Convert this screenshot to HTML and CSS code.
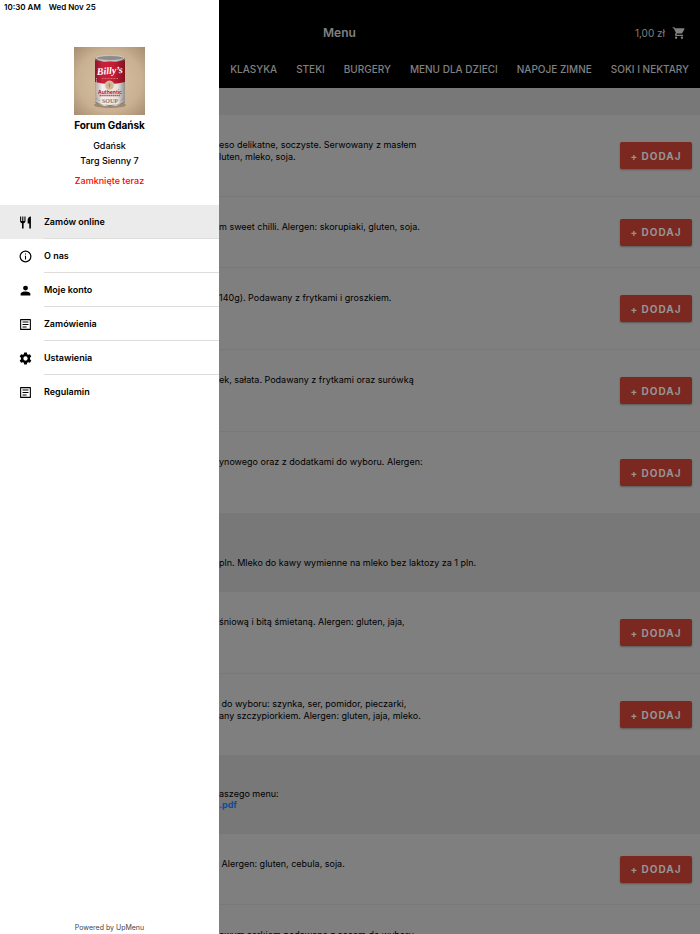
FILE: index.html
```html
<!DOCTYPE html>
<html lang="pl">
<head>
<meta charset="utf-8">
<meta name="viewport" content="width=device-width, initial-scale=1">
<title>Menu</title>
<link rel="stylesheet" href="styles.css">
</head>
<body>
<div class="app">
  <aside class="drawer">
    <div class="status"><span>10:30 AM</span><span>Wed Nov 25</span></div>
    <div class="place">
      <svg class="logo" viewBox="0 0 71 68" aria-hidden="true">
        <defs>
          <radialGradient id="paper" r=".75"><stop offset="0" stop-color="#d8c1a4"/><stop offset=".6" stop-color="#c9b092"/><stop offset="1" stop-color="#a0866b"/></radialGradient>
          <linearGradient id="red"><stop offset="0" stop-color="#8d1524"/><stop offset=".25" stop-color="#c9213a"/><stop offset=".6" stop-color="#c71d35"/><stop offset="1" stop-color="#84121f"/></linearGradient>
          <linearGradient id="white"><stop offset="0" stop-color="#a9a29c"/><stop offset=".25" stop-color="#f3efec"/><stop offset=".75" stop-color="#e7e2df"/><stop offset="1" stop-color="#948e89"/></linearGradient>
          <linearGradient id="metal"><stop offset="0" stop-color="#555"/><stop offset=".3" stop-color="#ddd"/><stop offset=".5" stop-color="#777"/><stop offset=".7" stop-color="#ccc"/><stop offset="1" stop-color="#555"/></linearGradient>
        </defs>
        <rect width="71" height="68" fill="url(#paper)"/>
        <ellipse cx="36" cy="58" rx="16" ry="3" fill="#765d45" opacity=".5"/>
        <path d="M21.500 11Q36 5 50.500 11V56Q36 63 21.500 56Z" fill="url(#metal)"/>
        <path d="M21 14Q36 18 51 14V55Q36 61 21 55Z" fill="url(#white)"/>
        <path d="M21 13Q36 17 51 13V35Q36 39 21 35Z" fill="url(#red)"/>
        <ellipse cx="36" cy="11" rx="14" ry="2.500" fill="#8e8c88" stroke="#d3d0cb" stroke-width=".8"/>
        <text class="logo-script" x="36" y="27" text-anchor="middle" transform="rotate(-4 36 27)">Billy’s</text>
        <path d="M28 31.500H44" stroke="#dd8a8f" stroke-width=".7" stroke-dasharray="1 .5"/>
        <circle cx="35.500" cy="38.500" r="4.500" fill="#cfb796" stroke="#eadcc5" stroke-width=".7"/>
        <path d="M35.500 36.500V40.500M34.500 38H36.500" stroke="#8d7454" stroke-width=".6"/>
        <text class="logo-line" x="36" y="47" text-anchor="middle">Authentic</text>
        <path d="M25.500 48.500H46.500" stroke="#c94a58" stroke-width="1.400" stroke-dasharray="1.500 .4"/>
        <text class="logo-soup" x="36" y="56" text-anchor="middle">SOUP</text>
        <path d="M22.500 31V46" stroke="#d9bcbc" stroke-width=".8" stroke-dasharray="1 .6"/>
        <path d="M22.500 51.500L26 54M46.500 54L50 51" stroke="#8b7770" stroke-width=".8" stroke-dasharray="1 .5"/>
      </svg>
      <h2 class="place-name">Forum Gdańsk</h2>
      <p class="address">Gdańsk<br>Targ Sienny 7</p>
      <p class="closed">Zamknięte teraz</p>
    </div>
    <nav class="links">
      <a class="link active" href="#"><svg viewBox="0 0 24 24"><path d="M2 1v8c0 2.300 1.500 4 3.500 4.400V23h3v-9.600C10.500 13 12 11.300 12 9V1h-2v8H8V1H6v8H4V1zM22 1c-3.500 0-6 3-6 7v6h3v9h3z"/></svg><span>Zamów online</span></a>
      <a class="link" href="#"><svg viewBox="0 0 24 24"><path d="M11 6.500h2v2h-2zm0 4h2v7h-2zM12 1a11 11 0 1 0 0 22 11 11 0 0 0 0-22zm0 19.800a8.800 8.800 0 1 1 0-17.600 8.800 8.800 0 0 1 0 17.600z"/></svg><span>O nas</span></a>
      <a class="link" href="#"><svg viewBox="0 0 24 24"><path d="M12 12a4.500 4.500 0 1 0 0-9 4.500 4.500 0 0 0 0 9zm0 2c-3.300 0-9 1.500-9 4.500V21h18v-2.500c0-3-5.700-4.500-9-4.500z"/></svg><span>Moje konto</span></a>
      <a class="link" href="#"><svg viewBox="0 0 24 24"><path d="M20 4v16H4V4zm1-2H3a1 1 0 0 0-1 1v18a1 1 0 0 0 1 1h18a1 1 0 0 0 1-1V3a1 1 0 0 0-1-1zM6.500 6.500h11v2h-11zm0 4.500h11v2h-11zm0 4.500H14v2H6.500z"/></svg><span>Zamówienia</span></a>
      <a class="link" href="#"><svg viewBox="0 0 24 24"><path fill-rule="evenodd" d="M9.500 1h5l.5 3 2.300 1.300 2.900-1.100 2.500 4.300-2.400 1.900v3.200l2.400 1.900-2.500 4.300-2.900-1.100L15 20l-.5 3h-5L9 20l-2.300-1.300-2.900 1.100-2.500-4.300 2.400-1.900v-3.200L1.300 8.500l2.500-4.300 2.900 1.100L9 4zM12 8a4 4 0 1 0 0 8 4 4 0 0 0 0-8z"/></svg><span>Ustawienia</span></a>
      <a class="link" href="#"><svg viewBox="0 0 24 24"><path d="M20 4v16H4V4zm1-2H3a1 1 0 0 0-1 1v18a1 1 0 0 0 1 1h18a1 1 0 0 0 1-1V3a1 1 0 0 0-1-1zM6.500 6.500h11v2h-11zm0 4.500h11v2h-11zm0 4.500H14v2H6.500z"/></svg><span>Regulamin</span></a>
    </nav>
    <p class="powered">Powered by UpMenu</p>
  </aside>
  <div class="page">
    <header class="header">
      <div class="bar">
        <h1 class="title">Menu</h1>
        <span class="price">1,00 zł</span>
        <svg class="cart" viewBox="0 0 24 24" aria-hidden="true"><path d="M7 18a2 2 0 1 0 0 4 2 2 0 0 0 0-4zM1 2v2h2l3.600 7.600-1.400 2.400C4.500 15.400 5.500 17 7 17h12v-2H7.400l1.100-2h7.500c.7 0 1.400-.4 1.700-1l3.600-6.500A1 1 0 0 0 20.400 4H5.200l-.9-2zm16 16a2 2 0 1 0 0 4 2 2 0 0 0 0-4z"/></svg>
      </div>
      <nav class="tabs">
        <a href="#">KLASYKA</a><a href="#">STEKI</a><a href="#">BURGERY</a><a href="#">MENU DLA DZIECI</a><a href="#">NAPOJE ZIMNE</a><a href="#">SOKI I NEKTARY</a>
      </nav>
    </header>
    <main class="menu">
      <div class="band"></div>
      <article class="dish"><p>eso delikatne, soczyste. Serwowany z masłem<br>luten, mleko, soja.</p><button class="add">+ DODAJ</button></article>
      <article class="dish short"><p>m sweet chilli. Alergen: skorupiaki, gluten, soja.</p><button class="add">+ DODAJ</button></article>
      <article class="dish"><p>140g). Podawany z frytkami i groszkiem.</p><button class="add">+ DODAJ</button></article>
      <article class="dish"><p>ek, sałata. Podawany z frytkami oraz surówką</p><button class="add">+ DODAJ</button></article>
      <article class="dish"><p>ynowego oraz z dodatkami do wyboru. Alergen:</p><button class="add">+ DODAJ</button></article>
      <section class="group"><p>pln. Mleko do kawy wymienne na mleko bez laktozy za 1 pln.</p></section>
      <article class="dish"><p>śniową i bitą śmietaną. Alergen: gluten, jaja,</p><button class="add">+ DODAJ</button></article>
      <article class="dish"><p>&nbsp;do wyboru: szynka, ser, pomidor, pieczarki,<br>any szczypiorkiem. Alergen: gluten, jaja, mleko.</p><button class="add">+ DODAJ</button></article>
      <section class="group"><p>aszego menu:<br><a href="#">.pdf</a></p></section>
      <article class="dish short"><p>&nbsp;Alergen: gluten, cebula, soja.</p><button class="add">+ DODAJ</button></article>
      <article class="dish"><p>owym serkiem podawane z sosem do wyboru.</p></article>
    </main>
  </div>
</div>
</body>
</html>
```
FILE: styles.css
```css
* {
  box-sizing: border-box;
}

body,
h1,
h2,
p {
  margin: 0;
}

body {
  font-family: Inter, "Liberation Sans", sans-serif;
  font-size: 9px;
  line-height: 12px;
  color: #000;
}

a {
  color: inherit;
  text-decoration: none;
}

.app {
  display: flex;
  height: 100vh;
  overflow: hidden;
  background: #7f7f7f;
}

.drawer {
  flex: 0 0 219px;
  display: flex;
  flex-direction: column;
  background: #fff;
}

.status {
  display: flex;
  gap: 8px;
  padding: 1px 4px;
  font-size: 8px;
  font-weight: 600;
}

.place {
  display: flex;
  flex-direction: column;
  align-items: center;
  padding-top: 33px;
  text-align: center;
}

.logo {
  width: 71px;
  height: 68px;
}

.logo-script {
  font: italic bold 10px "Liberation Serif", serif;
  fill: #fff;
}

.logo-line {
  font: bold 5px Inter, sans-serif;
  fill: #b52035;
}

.logo-soup {
  font: bold 6px "Liberation Serif", serif;
  fill: #8a7562;
}

.place-name {
  margin-top: 3px;
  font-size: 10px;
  line-height: 14px;
  font-weight: 700;
}

.address {
  margin-top: 6px;
  font-weight: 500;
  line-height: 15px;
}

.closed {
  margin-top: 6px;
  font-weight: 500;
  line-height: 14px;
  color: #f00;
}

.links {
  margin-top: 17px;
}

.link {
  display: flex;
  align-items: center;
  height: 34px;
  padding-left: 19px;
  font-weight: 600;
}

.link svg {
  width: 13px;
  height: 13px;
  margin-right: 12px;
}

.link span {
  flex: 1;
  line-height: 33px;
  border-bottom: 1px solid #ddd;
}

.link:last-child span {
  border-bottom-color: transparent;
}

.active {
  background: #ebebeb;
}

.powered {
  margin-top: auto;
  font-size: 7px;
  text-align: center;
  color: #444;
}

.page {
  flex: 1;
  min-width: 0;
  overflow: hidden;
}

.header {
  height: 88px;
  padding-top: 22px;
  background: #000;
  color: #808080;
  font-size: 10px;
}

.bar {
  display: flex;
  align-items: center;
  height: 22px;
  padding: 0 14px 0 104px;
}

.title {
  flex: 1;
  font-size: 12px;
  font-weight: 600;
}

.cart {
  width: 14px;
  height: 14px;
  margin-left: 7px;
  fill: currentColor;
}

.tabs {
  display: flex;
  justify-content: flex-end;
  gap: 19px;
  padding: 19px 11px 0 0;
  font-weight: 500;
  white-space: nowrap;
}

.band {
  height: 27px;
  background: #787878;
}

.dish {
  display: flex;
  justify-content: space-between;
  align-items: center;
  min-height: 82px;
  padding-right: 8px;
  border-bottom: 1px solid #797979;
}

.short {
  min-height: 71px;
}

.dish p {
  align-self: flex-start;
  padding-top: 24px;
  white-space: nowrap;
}

.add {
  width: 72px;
  height: 27px;
  padding: 0;
  border: 0;
  border-radius: 2px;
  background: #7a2820;
  box-shadow: 0 1px 2px rgba(0, 0, 0, 0.3);
  color: #959595;
  font: 700 10px Inter, sans-serif;
  letter-spacing: 1px;
}

.group {
  display: flex;
  align-items: flex-end;
  min-height: 78px;
  padding-bottom: 24px;
  background: #787878;
  line-height: 11px;
}

.group a {
  font-weight: 700;
  color: #0a4f96;
}
```
